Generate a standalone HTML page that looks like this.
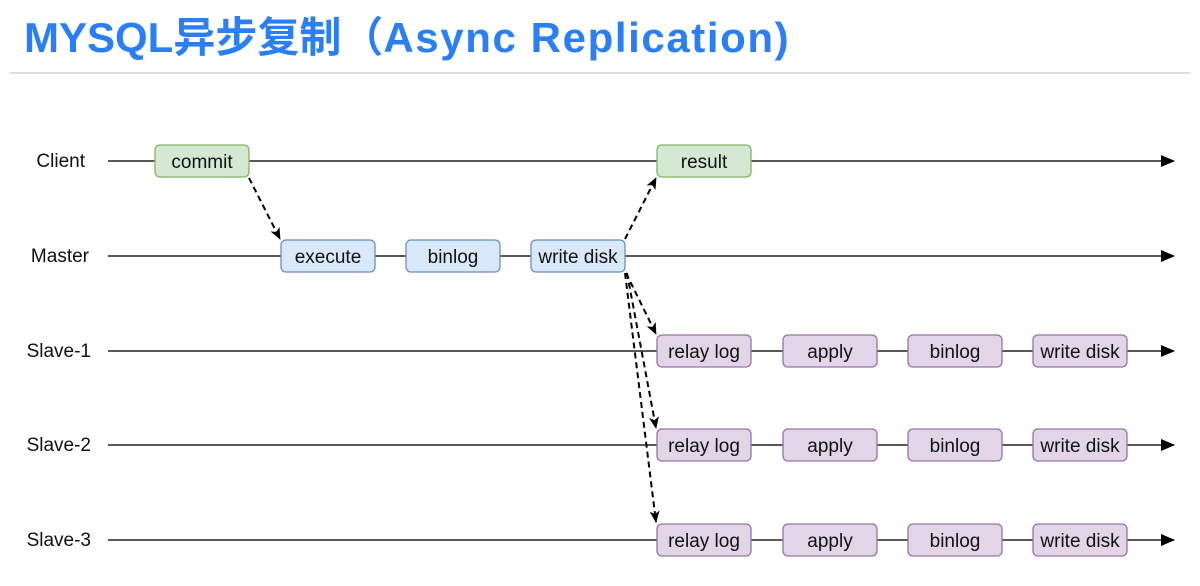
<!DOCTYPE html>
<html><head><meta charset="utf-8"><style>
html,body{margin:0;padding:0;background:#fff;width:1200px;height:586px;overflow:hidden}
.t{position:absolute;left:24px;top:4px;font:bold 42px "Liberation Sans","Noto Sans CJK SC",sans-serif;color:#2b7ff6;white-space:nowrap}
.t span{letter-spacing:1.6px}
.hr{position:absolute;left:10px;top:72px;width:1180px;height:2px;background:#dcdcdc}
svg{position:absolute;left:0;top:0}
svg text{font-family:"Liberation Sans",sans-serif;font-size:19px;fill:#111}
</style></head><body>
<div class="t">MYSQL异步复制（<span>Async Replication)</span></div>
<div class="hr"></div>
<svg width="1200" height="586" viewBox="0 0 1200 586">
<defs>
<marker id="a" markerWidth="12" markerHeight="12" refX="11" refY="5" orient="auto" markerUnits="userSpaceOnUse"><path d="M0,0 L12,5 L0,10 L3,5 Z" fill="#000"/></marker>
<marker id="b" markerWidth="14" markerHeight="12" refX="13" refY="6" orient="auto" markerUnits="userSpaceOnUse"><path d="M0,0 L14,6 L0,12 Z" fill="#000"/></marker>
</defs>
<g stroke="#222" stroke-width="1.5" fill="none">
<line x1="108" y1="161" x2="1174" y2="161" marker-end="url(#b)"/>
<line x1="108" y1="256" x2="1174" y2="256" marker-end="url(#b)"/>
<line x1="108" y1="351" x2="1174" y2="351" marker-end="url(#b)"/>
<line x1="108" y1="445" x2="1174" y2="445" marker-end="url(#b)"/>
<line x1="108" y1="540" x2="1174" y2="540" marker-end="url(#b)"/>
</g>
<g text-anchor="end">
<text x="85" y="167">Client</text>
<text x="89" y="262">Master</text>
<text x="91" y="357">Slave-1</text>
<text x="91" y="451">Slave-2</text>
<text x="91" y="546">Slave-3</text>
</g>
<g stroke-width="1.3">
<rect x="155" y="145" width="94" height="32" rx="5" fill="#d5e8d4" stroke="#82b366"/>
<rect x="657" y="145" width="94" height="32" rx="5" fill="#d5e8d4" stroke="#82b366"/>
<rect x="281" y="240" width="94" height="32" rx="5" fill="#dae8fc" stroke="#6c8ebf"/>
<rect x="406" y="240" width="94" height="32" rx="5" fill="#dae8fc" stroke="#6c8ebf"/>
<rect x="531" y="240" width="94" height="32" rx="5" fill="#dae8fc" stroke="#6c8ebf"/>
<g fill="#e1d5e7" stroke="#9673a6">
<rect x="657" y="335" width="94" height="32" rx="5"/><rect x="783" y="335" width="94" height="32" rx="5"/><rect x="908" y="335" width="94" height="32" rx="5"/><rect x="1033" y="335" width="94" height="32" rx="5"/>
<rect x="657" y="429" width="94" height="32" rx="5"/><rect x="783" y="429" width="94" height="32" rx="5"/><rect x="908" y="429" width="94" height="32" rx="5"/><rect x="1033" y="429" width="94" height="32" rx="5"/>
<rect x="657" y="524" width="94" height="32" rx="5"/><rect x="783" y="524" width="94" height="32" rx="5"/><rect x="908" y="524" width="94" height="32" rx="5"/><rect x="1033" y="524" width="94" height="32" rx="5"/>
</g>
</g>
<g text-anchor="middle">
<text x="202" y="168">commit</text>
<text x="704" y="168">result</text>
<text x="328" y="263">execute</text>
<text x="453" y="263">binlog</text>
<text x="578" y="263">write disk</text>
<text x="704" y="358">relay log</text><text x="830" y="358">apply</text><text x="955" y="358">binlog</text><text x="1080" y="358">write disk</text>
<text x="704" y="452">relay log</text><text x="830" y="452">apply</text><text x="955" y="452">binlog</text><text x="1080" y="452">write disk</text>
<text x="704" y="547">relay log</text><text x="830" y="547">apply</text><text x="955" y="547">binlog</text><text x="1080" y="547">write disk</text>
</g>
<g stroke="#000" stroke-width="2" stroke-dasharray="6,4" fill="none">
<line x1="249" y1="178" x2="280" y2="239" marker-end="url(#a)"/>
<line x1="625" y1="239" x2="656" y2="178" marker-end="url(#a)"/>
<line x1="626" y1="273" x2="656" y2="334" marker-end="url(#a)"/>
<line x1="627" y1="273" x2="656" y2="428" marker-end="url(#a)"/>
<line x1="625" y1="273" x2="656" y2="522" marker-end="url(#a)"/>
</g>
</svg>
</body></html>
